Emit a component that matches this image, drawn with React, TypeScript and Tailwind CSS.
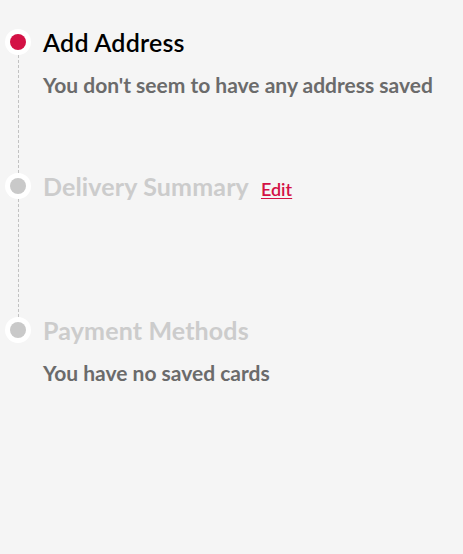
import React from 'react';

type Step = {
  title: string;
  active?: boolean;
  note?: string;
  edit?: boolean;
  last?: boolean;
};

const steps: Step[] = [
  { title: 'Add Address', active: true, note: "You don't seem to have any address saved" },
  { title: 'Delivery Summary', edit: true },
  { title: 'Payment Methods', note: 'You have no saved cards', last: true },
];

const App: React.FC = () => {
  return (
    <div
      className="w-[463px] h-[554px] bg-[#f5f5f5] pt-[29px] pl-[5px]"
      style={{ fontFamily: 'Lato, "Open Sans", sans-serif' }}
    >
      {steps.map((s) => (
        <div key={s.title} className={`flex ${s.last ? '' : 'h-[144px]'}`}>
          <div className="w-[26px] flex flex-col items-center shrink-0">
            <div className="w-[26px] h-[26px] rounded-full bg-white flex items-center justify-center shrink-0">
              <div className={`w-[16px] h-[16px] rounded-full ${s.active ? 'bg-[#d31145]' : 'bg-[#c9c9c9]'}`} />
            </div>
            {!s.last && <div className="flex-1 border-l border-dashed border-[#c2c2c2]" />}
          </div>
          <div className="ml-[12px] -mt-[4px]">
            <div className="flex items-baseline gap-[12px]">
              <h2
                className={`text-[25px] leading-[34px] ${
                  s.active ? 'text-black font-semibold tracking-[0.2px]' : 'text-[#cccccc] font-bold tracking-[0.15px]'
                }`}
              >
                {s.title}
              </h2>
              {s.edit && (
                <a href="#" className="text-[18px] font-semibold text-[#d31145] underline underline-offset-2">
                  Edit
                </a>
              )}
            </div>
            {s.note && (
              <p className="mt-[12px] text-[21px] leading-[28px] font-bold text-[#6b6b6b]">{s.note}</p>
            )}
          </div>
        </div>
      ))}
    </div>
  );
};

export default App;
